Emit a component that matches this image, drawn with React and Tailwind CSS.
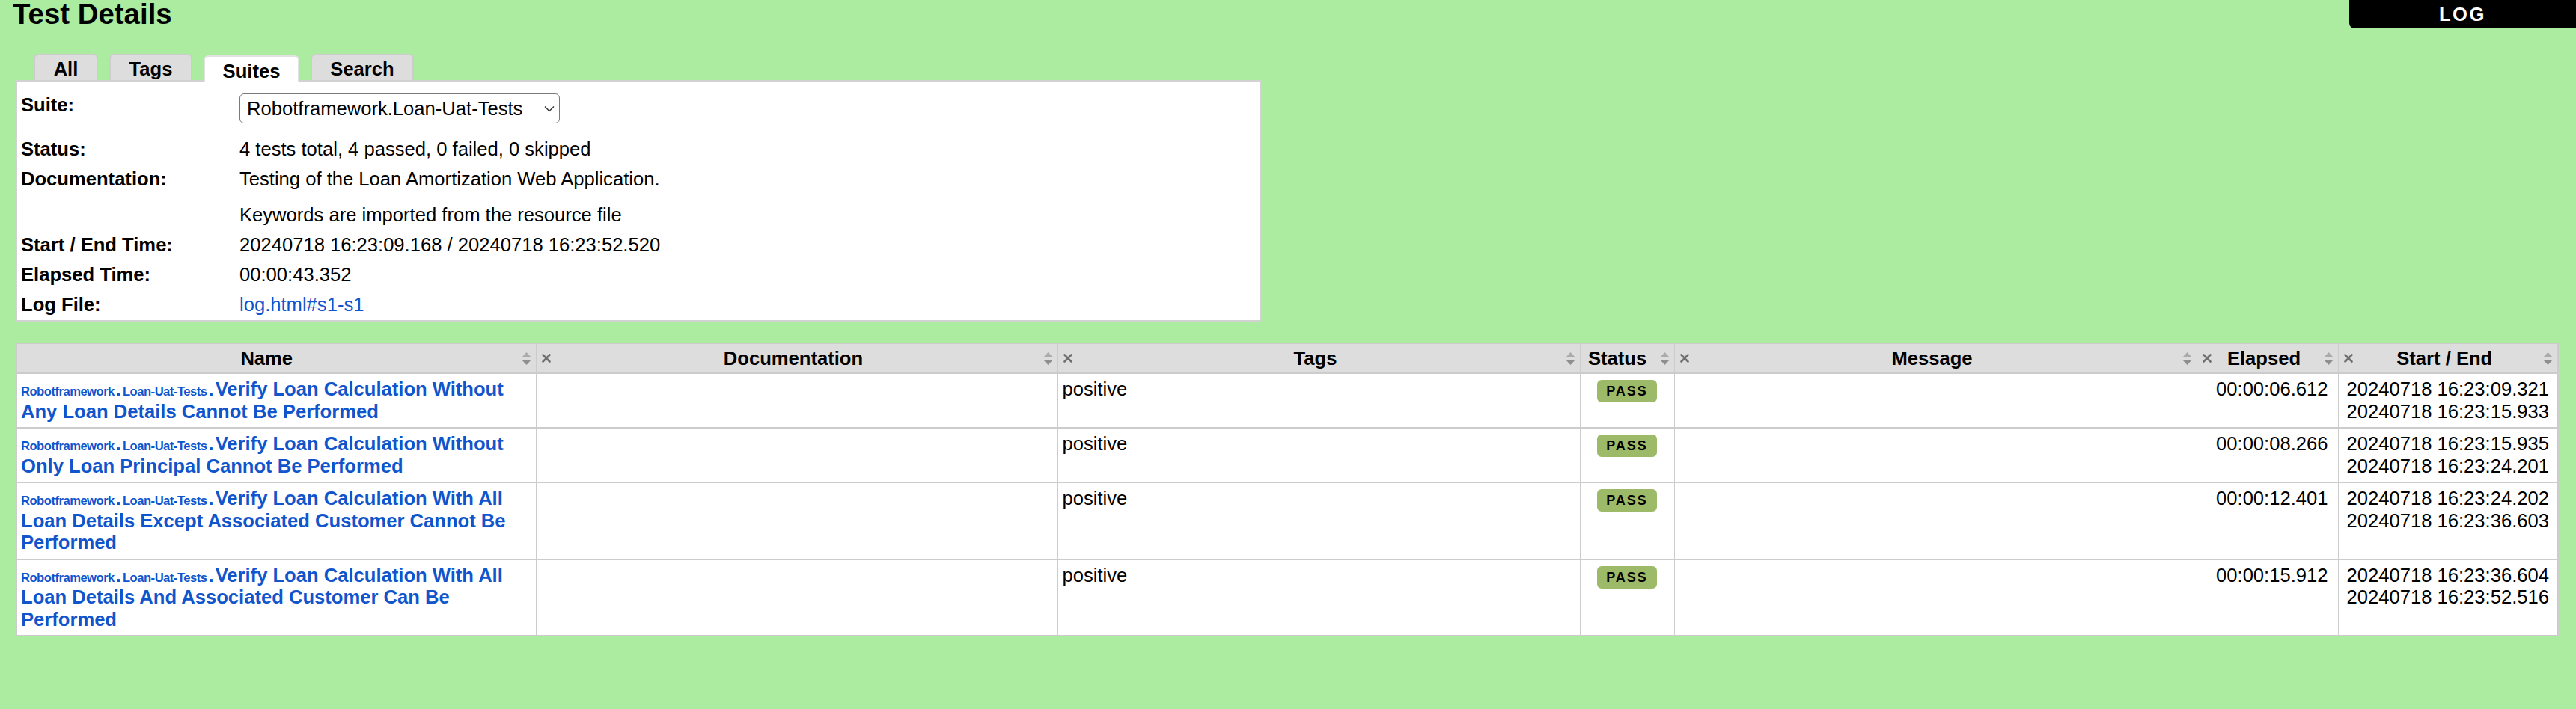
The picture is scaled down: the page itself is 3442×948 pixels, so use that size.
import React from "react";

const tests = [
  {
    name: "Verify Loan Calculation Without Any Loan Details Cannot Be Performed",
    elapsed: "00:00:06.612",
    start: "20240718 16:23:09.321",
    end: "20240718 16:23:15.933",
  },
  {
    name: "Verify Loan Calculation Without Only Loan Principal Cannot Be Performed",
    elapsed: "00:00:08.266",
    start: "20240718 16:23:15.935",
    end: "20240718 16:23:24.201",
  },
  {
    name: "Verify Loan Calculation With All Loan Details Except Associated Customer Cannot Be Performed",
    elapsed: "00:00:12.401",
    start: "20240718 16:23:24.202",
    end: "20240718 16:23:36.603",
  },
  {
    name: "Verify Loan Calculation With All Loan Details And Associated Customer Can Be Performed",
    elapsed: "00:00:15.912",
    start: "20240718 16:23:36.604",
    end: "20240718 16:23:52.516",
  },
];

const columns = [
  { title: "Name", width: "w-[694px]", hide: false },
  { title: "Documentation", width: "w-[697px]", hide: true },
  { title: "Tags", width: "w-[698px]", hide: true },
  { title: "Status", width: "w-[126px]", hide: false },
  { title: "Message", width: "w-[698px]", hide: true },
  { title: "Elapsed", width: "w-[189px]", hide: true },
  { title: "Start / End", width: "w-[294px]", hide: true },
];

const SortIcon = () => (
  <svg width="13" height="17" viewBox="0 0 13 17" className="shrink-0">
    <path d="M6.5 0 L13 7 L0 7 Z" fill="#ababab" />
    <path d="M0 10 L13 10 L6.5 17 Z" fill="#8e8e8e" />
  </svg>
);

const HideIcon = () => (
  <svg width="12" height="12" viewBox="0 0 12 12" className="shrink-0 ml-[7px]">
    <path d="M1.5 1.5 L10.5 10.5 M10.5 1.5 L1.5 10.5" stroke="#707070" strokeWidth="2.6" strokeLinecap="round" />
  </svg>
);

const Tab = ({ label, width, active }) =>
  active ? (
    <div
      className={`${width} h-[35px] -mb-[2px] relative bg-white border-2 border-b-0 border-[#e2e2e2] rounded-t-[6px] pt-[4px] text-center font-bold`}
    >
      {label}
    </div>
  ) : (
    <div
      className={`${width} h-[35px] mb-0 bg-[#dddddd] border-2 border-b-0 border-[#cdcdcd] rounded-t-[6px] pt-[3px] text-center font-bold`}
    >
      {label}
    </div>
  );

const InfoRow = ({ label, children, className = "" }) => (
  <div className={`flex py-[5px] ${className}`}>
    <div className="w-[292px] shrink-0 font-bold">{label}</div>
    <div>{children}</div>
  </div>
);

// parent suite names are printed small, separated by full-size dots
const Parent = ({ children }) => (
  <span className="text-[16.6px] leading-none tracking-[-0.5px]">{children}</span>
);
const Sep = () => <span className="mx-[2px]">.</span>;

export default function App() {
  return (
    <div className="relative min-h-[948px] bg-[#aceca0] text-black font-['Liberation_Sans',Arial,sans-serif] text-[25.6px] leading-[30px]">
      <a className="absolute top-0 right-0 w-[303px] h-[38px] bg-black text-white font-bold tracking-[2.6px] rounded-bl-[7px] flex items-center justify-center">
        LOG
      </a>

      <h2 className="pl-[17px] text-[38.4px] leading-[38px] font-bold">Test Details</h2>

      <div className="px-[21px]">
        <div className="flex items-end gap-[15px] pl-[24px] mt-[34px] h-[35px]">
          <Tab label="All" width="w-[86px]" />
          <Tab label="Tags" width="w-[111px]" />
          <Tab label="Suites" width="w-[128px]" active />
          <Tab label="Search" width="w-[138px]" />
        </div>

        <div className="w-[1664px] bg-white border-2 border-[#d2d2d2] pt-[11px] pb-[1px] pl-[5px]">
          <div className="flex h-[59px] py-[5px]">
            <div className="w-[292px] shrink-0 font-bold">Suite:</div>
            <div className="flex items-center justify-between w-[428px] h-[40px] border-[1.5px] border-[#7a7a7a] rounded-[6px] pl-[9px] pr-[6px]">
              <span>Robotframework.Loan-Uat-Tests</span>
              <svg width="14" height="9" viewBox="0 0 14 9">
                <path d="M1 1.5 L7 7.5 L13 1.5" fill="none" stroke="#333" strokeWidth="1.4" />
              </svg>
            </div>
          </div>
          <InfoRow label="Status:">4 tests total, 4 passed, 0 failed, 0 skipped</InfoRow>
          <InfoRow label="Documentation:">
            <p>Testing of the Loan Amortization Web Application.</p>
            <p className="mt-[18px]">Keywords are imported from the resource file</p>
          </InfoRow>
          <InfoRow label="Start / End Time:">20240718 16:23:09.168 / 20240718 16:23:52.520</InfoRow>
          <InfoRow label="Elapsed Time:">00:00:43.352</InfoRow>
          <InfoRow label="Log File:">
            <a className="text-[#1155cc]">log.html#s1-s1</a>
          </InfoRow>
        </div>

        <table className="mt-[28px] w-[3396px] table-fixed border-collapse border-2 border-[#cccccc] bg-white">
          <colgroup>
            {columns.map((c) => (
              <col key={c.title} className={c.width} />
            ))}
          </colgroup>
          <thead>
            <tr className="bg-[#dddddd]">
              {columns.map((c) => (
                <th key={c.title} className="h-[40px] p-0 border-b-2 border-r border-[#cccccc] font-bold">
                  <div className="flex items-center">
                    {c.hide && (
                      <div className="w-[17px] shrink-0 flex">
                        <HideIcon />
                      </div>
                    )}
                    <div className="flex-1 text-center whitespace-nowrap">{c.title}</div>
                    <div className="w-[26px] shrink-0 flex justify-end pr-[6px]">
                      <SortIcon />
                    </div>
                  </div>
                </th>
              ))}
            </tr>
          </thead>
          <tbody>
            {tests.map((t) => (
              <tr key={t.name} className="align-top">
                <td className="border-b-2 border-r border-[#cccccc] pl-[5px] pr-[6px] pt-[6px] pb-[6px] leading-[29.5px]">
                  <a className="font-bold text-[#1155cc]">
                    <Parent>Robotframework</Parent>
                    <Sep />
                    <Parent>Loan-Uat-Tests</Parent>
                    <Sep />
                    {t.name}
                  </a>
                </td>
                <td className="border-b-2 border-r border-[#cccccc]"></td>
                <td className="border-b-2 border-r border-[#cccccc] px-[6px] pt-[6px] leading-[29.5px]">positive</td>
                <td className="border-b-2 border-r border-[#cccccc] pt-[8px]">
                  <div className="flex justify-center">
                    <span className="bg-[#9cba68] rounded-[6px] px-[12px] h-[30px] flex items-center text-[18px] font-bold tracking-[2px] leading-none">
                      PASS
                    </span>
                  </div>
                </td>
                <td className="border-b-2 border-r border-[#cccccc]"></td>
                <td className="border-b-2 border-r border-[#cccccc] pt-[6px] pr-[13px] text-right leading-[29.5px]">{t.elapsed}</td>
                <td className="border-b-2 border-r border-[#cccccc] pt-[6px] text-center leading-[29.5px]">
                  <div>{t.start}</div>
                  <div>{t.end}</div>
                </td>
              </tr>
            ))}
          </tbody>
        </table>
      </div>
    </div>
  );
}
